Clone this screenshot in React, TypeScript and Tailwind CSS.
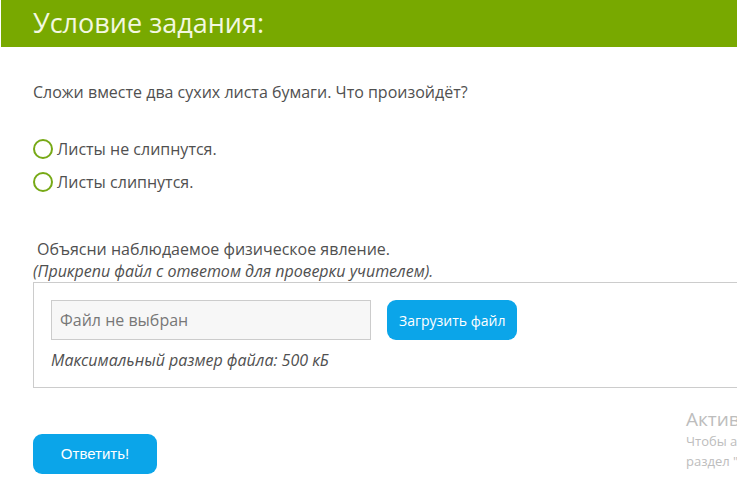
export default function App() {
  return (
    <div className="relative w-[737px] h-[490px] overflow-hidden bg-white font-['Open_Sans',sans-serif] text-[#505050]">
      <div className="h-[47px] ml-px bg-[#78a900] flex items-center pl-8 pb-[3px]">
        <h1 className="text-[27px] text-[#f3f8e0] leading-none">Условие задания:</h1>
      </div>

      <div className="pl-[33px]">
        <p className="mt-[34px] text-[16px] leading-[22px]">Сложи вместе два сухих листа бумаги. Что произойдёт?</p>

        <div className="mt-[36px] flex flex-col gap-[13px]">
          <label className="flex items-center gap-1 text-[16px] leading-5">
            <span className="w-[20px] h-[20px] rounded-full border-2 border-[#77a916]" />
            Листы не слипнутся.
          </label>
          <label className="flex items-center gap-1 text-[16px] leading-5">
            <span className="w-[20px] h-[20px] rounded-full border-2 border-[#77a916]" />
            Листы слипнутся.
          </label>
        </div>

        <p className="mt-[46px] pl-1 text-[16px] leading-[22px]">Объясни наблюдаемое физическое явление.</p>
        <p className="italic text-[16px] leading-[22px]">(Прикрепи файл с ответом для проверки учителем).</p>

        <div className="mr-[-30px] border border-[#cccccc] pt-[17px] pl-[17px] pb-[16px]">
          <div className="flex items-center gap-4">
            <div className="w-[320px] h-[40px] border border-[#cccccc] bg-[#f7f7f7] flex items-center pl-2 text-[16px] text-[#777]">
              Файл не выбран
            </div>
            <button className="h-[40px] px-3 rounded-[9px] bg-[#0ba5e9] text-white text-[14px]">Загрузить файл</button>
          </div>
          <p className="mt-[9px] italic text-[16px] leading-[22px]">Максимальный размер файла: 500 кБ</p>
        </div>

        <button className="mt-[46px] w-[124px] h-[40px] rounded-[9px] bg-[#0ba5e9] text-white text-[15px] font-['Liberation_Sans',sans-serif]">
          Ответить!
        </button>
      </div>

      <div className="absolute left-[686px] top-[407px] text-[#bdbdbd] whitespace-nowrap">
        <div className="text-[19px] leading-6">Активация Windows</div>
        <div className="text-[13px] leading-[20px]">Чтобы активировать Windows, перейдите в</div>
        <div className="text-[13px] leading-[20px]">раздел "Параметры".</div>
      </div>
    </div>
  )
}
